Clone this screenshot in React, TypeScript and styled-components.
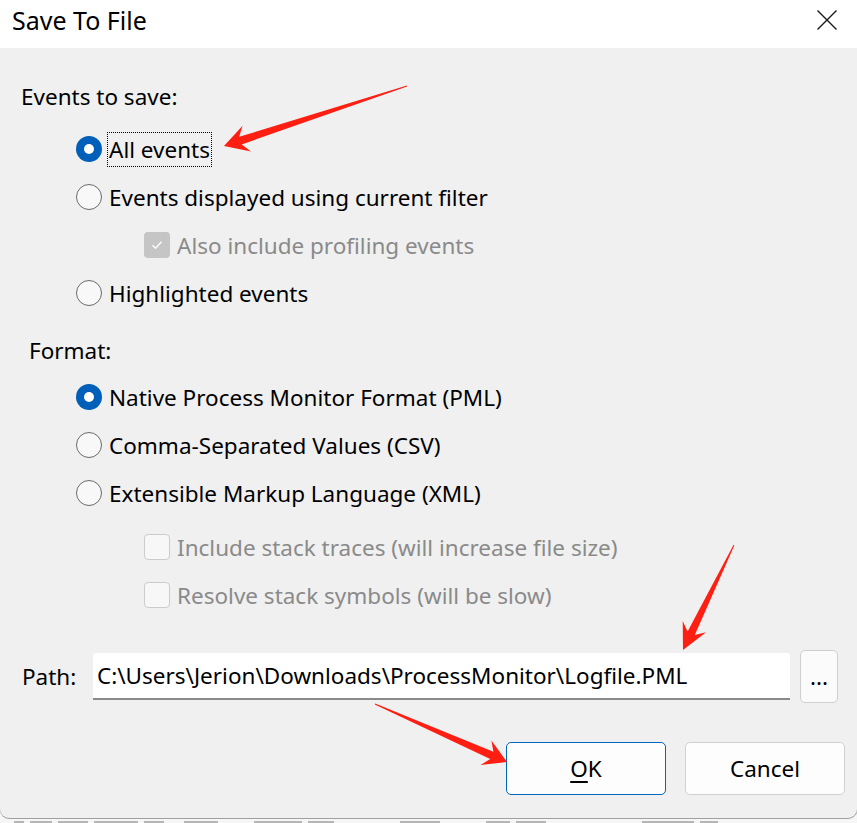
import React from 'react';
import styled, { createGlobalStyle, css } from 'styled-components';

const Global = createGlobalStyle`
  html, body { margin: 0; padding: 0; background: #f4f4f4; }
  body { font-family: "Noto Sans", "Open Sans", sans-serif; color: #000; }
  #root { width: 857px; height: 823px; }
`;

const Screen = styled.div`
  position: relative;
  width: 857px;
  height: 823px;
  overflow: hidden;
  display: flex;
  flex-direction: column;
  background: #f6f6f6;
`;

const Dialog = styled.div`
  width: 857px;
  height: 818px;
  flex: none;
  display: flex;
  flex-direction: column;
  background: #f0f0f0;
  border-radius: 0 0 9px 9px;
  box-shadow: 0 1px 0 #a0a0a0, 1px 0 0 #c8c8c8;
  overflow: hidden;
`;

const TitleBar = styled.div`
  height: 48px;
  flex: none;
  background: #fff;
  display: flex;
  align-items: flex-start;
  justify-content: space-between;
`;

const Title = styled.div`
  font-size: 25px;
  line-height: 34px;
  padding: 3px 0 0 12px;
  color: #000;
`;

const CloseBox = styled.div`
  width: 60px;
  height: 39px;
  display: flex;
  align-items: center;
  justify-content: center;
`;

const Body = styled.div`
  flex: 1;
  display: flex;
  flex-direction: column;
  padding-top: 24px;
  font-size: 22.5px;
`;

const SectionLabel = styled.div<{ $indent: number; $h?: number; $mt?: number }>`
  height: ${p => p.$h ?? 48}px;
  margin-top: ${p => p.$mt ?? 0}px;
  display: flex;
  align-items: center;
  padding-left: ${p => p.$indent}px;
`;

const Group = styled.div<{ $mt: number }>`
  display: flex;
  flex-direction: column;
  margin-top: ${p => p.$mt}px;
`;

const OptionRow = styled.div<{ $indent: number; $gap: number }>`
  height: 48px;
  display: flex;
  align-items: center;
  padding-left: ${p => p.$indent}px;
  gap: ${p => p.$gap}px;
`;

const RadioCircle = styled.span<{ $checked?: boolean }>`
  box-sizing: border-box;
  width: 26px;
  height: 26px;
  border-radius: 50%;
  flex: none;
  display: flex;
  align-items: center;
  justify-content: center;
  ${p =>
    p.$checked
      ? css`
          background: #005fb8;
          &::after {
            content: '';
            width: 10px;
            height: 10px;
            border-radius: 50%;
            background: #fff;
          }
        `
      : css`
          border: 1.5px solid #6a6a6a;
          background: #f8f8f8;
        `}
`;

const CheckBox = styled.span<{ $checked?: boolean }>`
  box-sizing: border-box;
  width: 26px;
  height: 26px;
  border-radius: 4px;
  flex: none;
  display: flex;
  align-items: center;
  justify-content: center;
  ${p =>
    p.$checked
      ? css`
          background: #c5c5c5;
        `
      : css`
          border: 1px solid #cbcbcb;
          background: #f7f7f7;
        `}
`;

const OptionText = styled.span<{ $disabled?: boolean; $focused?: boolean }>`
  color: ${p => (p.$disabled ? '#8a8a8a' : '#000')};
  line-height: 33px;
  white-space: nowrap;
  ${p =>
    p.$focused &&
    css`
      border: 1px dotted #000;
      padding: 0 1px;
      margin-left: -2px;
    `}
`;

const PathRow = styled.div`
  margin-top: 31px;
  height: 53px;
  display: flex;
  align-items: center;
  padding-left: 22px;
`;

const PathLabel = styled.span`
  width: 71px;
  flex: none;
`;

const PathInput = styled.div`
  box-sizing: border-box;
  width: 697px;
  height: 47px;
  flex: none;
  background: #fff;
  border-radius: 3px 3px 0 0;
  border-bottom: 2px solid #8a8a8a;
  display: flex;
  align-items: center;
  padding: 0 0 0 4px;
  white-space: nowrap;
`;

const SmallButton = styled.div`
  box-sizing: border-box;
  margin-left: 10px;
  width: 38px;
  height: 53px;
  border: 1px solid #cfcfcf;
  border-radius: 5px;
  background: #fbfbfb;
  display: flex;
  align-items: center;
  justify-content: center;
  font-size: 22.5px;
`;

const ButtonRow = styled.div`
  margin-top: 39px;
  display: flex;
  justify-content: flex-end;
  gap: 19px;
  padding-right: 12px;
`;

const DialogButton = styled.div<{ $primary?: boolean }>`
  box-sizing: border-box;
  width: 160px;
  height: 53px;
  border-radius: 5px;
  background: #fdfdfd;
  border: 1px solid ${p => (p.$primary ? '#0067c0' : '#d0d0d0')};
  display: flex;
  align-items: center;
  justify-content: center;
  font-size: 22.5px;
`;

const Mnemonic = styled.span`
  text-decoration: underline;
  text-decoration-thickness: 2px;
  text-underline-offset: 4px;
`;

const BackStrip = styled.div`
  flex: 1;
  overflow: hidden;
  display: flex;
  align-items: flex-end;
  gap: 6px;
  padding: 0 0 0 14px;
`;

const BackMark = styled.span<{ $w: number; $gapBefore?: number }>`
  width: ${p => p.$w}px;
  height: 2px;
  margin-left: ${p => p.$gapBefore ?? 0}px;
  background: #8a8a8a;
  opacity: 0.6;
`;

const Overlay = styled.svg`
  position: absolute;
  left: 0;
  top: 0;
  width: 857px;
  height: 823px;
  pointer-events: none;
`;

type Pt = [number, number];

function arrowPoints(T: Pt, P: Pt, headLen: number, headHalf: number, shaftHalf: number): string {
  const dx = P[0] - T[0];
  const dy = P[1] - T[1];
  const len = Math.hypot(dx, dy);
  const ux = dx / len;
  const uy = dy / len;
  const nx = -uy;
  const ny = ux;
  const bj = headLen * 0.72;
  const J: Pt = [P[0] - ux * bj, P[1] - uy * bj];
  const H: Pt = [P[0] - ux * headLen, P[1] - uy * headLen];
  const pts: Pt[] = [
    [T[0] + nx * 0.4, T[1] + ny * 0.4],
    [J[0] + nx * shaftHalf, J[1] + ny * shaftHalf],
    [H[0] + nx * headHalf, H[1] + ny * headHalf],
    P,
    [H[0] - nx * headHalf, H[1] - ny * headHalf],
    [J[0] - nx * shaftHalf, J[1] - ny * shaftHalf],
    [T[0] - nx * 0.4, T[1] - ny * 0.4],
  ];
  return pts.map(p => `${p[0].toFixed(1)},${p[1].toFixed(1)}`).join(' ');
}

const Radio = ({ checked, label, focused }: { checked?: boolean; label: string; focused?: boolean }) => (
  <OptionRow $indent={76} $gap={7}>
    <RadioCircle $checked={checked} />
    <OptionText $focused={focused}>{label}</OptionText>
  </OptionRow>
);

const Check = ({ checked, label }: { checked?: boolean; label: string }) => (
  <OptionRow $indent={144} $gap={7}>
    <CheckBox $checked={checked}>
      {checked && (
        <svg width="14" height="14" viewBox="0 0 14 14">
          <path d="M2.5 7.2 L5.6 10.2 L11.5 3.8" fill="none" stroke="#fff" strokeWidth="1.3" />
        </svg>
      )}
    </CheckBox>
    <OptionText $disabled>{label}</OptionText>
  </OptionRow>
);

const marks = [
  { w: 10 }, { w: 22 }, { w: 30 }, { w: 44 }, { w: 20 }, { w: 34, g: 14 },
  { w: 48, g: 30 }, { w: 26 }, { w: 40, g: 60 }, { w: 24, g: 40 }, { w: 30 },
  { w: 52, g: 90 }, { w: 18 },
];

export default function App() {
  return (
    <Screen>
      <Global />
      <Dialog>
        <TitleBar>
          <Title>Save To File</Title>
          <CloseBox>
            <svg width="22" height="22" viewBox="0 0 22 22">
              <path d="M1.5 1.5 L20.5 20.5 M20.5 1.5 L1.5 20.5" stroke="#1a1a1a" strokeWidth="1.4" />
            </svg>
          </CloseBox>
        </TitleBar>
        <Body>
          <SectionLabel $indent={21}>Events to save:</SectionLabel>
          <Group $mt={5}>
            <Radio checked focused label="All events" />
            <Radio label="Events displayed using current filter" />
            <Check checked label="Also include profiling events" />
            <Radio label="Highlighted events" />
          </Group>
          <SectionLabel $indent={29} $h={46} $mt={10}>Format:</SectionLabel>
          <Group $mt={0}>
            <Radio checked label="Native Process Monitor Format (PML)" />
            <Radio label="Comma-Separated Values (CSV)" />
            <Radio label="Extensible Markup Language (XML)" />
          </Group>
          <Group $mt={6}>
            <Check label="Include stack traces (will increase file size)" />
            <Check label="Resolve stack symbols (will be slow)" />
          </Group>
          <PathRow>
            <PathLabel>Path:</PathLabel>
            <PathInput>C:\Users\Jerion\Downloads\ProcessMonitor\Logfile.PML</PathInput>
            <SmallButton>...</SmallButton>
          </PathRow>
          <ButtonRow>
            <DialogButton $primary>
              <span>
                <Mnemonic>O</Mnemonic>K
              </span>
            </DialogButton>
            <DialogButton>Cancel</DialogButton>
          </ButtonRow>
        </Body>
      </Dialog>
      <BackStrip>
        {marks.map((m, i) => (
          <BackMark key={i} $w={m.w} $gapBefore={m.g} />
        ))}
      </BackStrip>
      <Overlay viewBox="0 0 857 823">
        <polygon points={arrowPoints([407, 86], [224, 146], 24, 13.5, 4)} fill="#ff1e12" />
        <polygon points={arrowPoints([734, 545], [683, 650], 26, 13, 4)} fill="#ff1e12" />
        <polygon points={arrowPoints([375, 704], [507, 762], 23, 13.5, 4)} fill="#ff1e12" />
      </Overlay>
    </Screen>
  );
}
